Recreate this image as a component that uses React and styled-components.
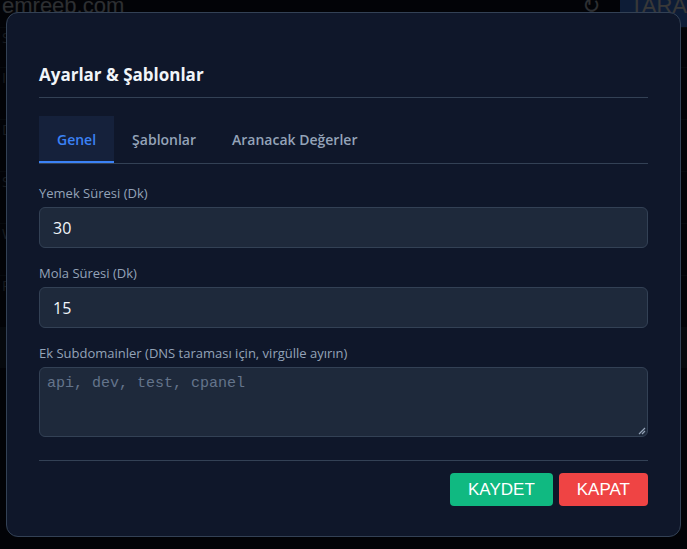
import React from "react";
import styled, { createGlobalStyle } from "styled-components";

const GlobalStyle = createGlobalStyle`
  html, body {
    margin: 0;
    padding: 0;
    height: 100%;
    background: #0b1120;
    font-family: "Open Sans", "Noto Sans", sans-serif;
    overflow: hidden;
  }
  * {
    box-sizing: border-box;
  }
`;

// page behind the modal
const Page = styled.div`
  margin-top: -16px;
  display: flex;
  flex-direction: column;
`;
const SearchBar = styled.div`
  display: flex;
  align-items: center;
  height: 44px;
  border-bottom: 1px solid #1e293b;
`;
const SearchInput = styled.div`
  flex: 1;
  display: flex;
  align-items: center;
  justify-content: space-between;
  height: 100%;
  padding: 0 20px 0 2px;
  color: #cbd5e1;
  font-family: "Liberation Sans", sans-serif;
  font-size: 22px;
`;
const ScanButton = styled.div`
  width: 77px;
  height: 100%;
  background: #3b82f6;
  color: #ffffff;
  font-family: "Liberation Sans", sans-serif;
  font-size: 22px;
  display: flex;
  align-items: center;
  justify-content: center;
  margin-right: -10px;
`;
const BgRow = styled.div`
  height: ${(p) => p.$h}px;
  border-bottom: 1px solid #1e293b;
  background: ${(p) => p.$bg || "transparent"};
  color: #64748b;
  font-size: 14px;
  padding-left: 2px;
`;

const Overlay = styled.div`
  position: fixed;
  inset: 0;
  background: rgba(0, 0, 0, 0.78);
  display: flex;
  align-items: flex-start;
  justify-content: center;
  padding-top: 12px;
`;

const Modal = styled.div`
  width: 675px;
  background: #0f172a;
  border: 1px solid #334155;
  border-radius: 12px;
  padding: 32px 32px 30px;
  display: flex;
  flex-direction: column;
`;
const Header = styled.div`
  padding: 18px 0 10px;
  border-bottom: 1px solid #334155;
`;
const Title = styled.h3`
  margin: 0;
  font-size: 17px;
  line-height: 24px;
  font-weight: 700;
  color: #f1f5f9;
`;

const TabList = styled.div`
  margin-top: 18px;
  display: flex;
  border-bottom: 1px solid #334155;
`;
const Tab = styled.div`
  height: 47px;
  padding: 2px 18px 0;
  display: flex;
  align-items: center;
  font-size: 14px;
  font-weight: 600;
  color: ${(p) => (p.$active ? "#3b82f6" : "#94a3b8")};
  background: ${(p) => (p.$active ? "#15213b" : "transparent")};
  border-bottom: 2px solid ${(p) => (p.$active ? "#3b82f6" : "transparent")};
`;

const Form = styled.div`
  margin-top: 20px;
  display: flex;
  flex-direction: column;
  gap: 16px;
`;
const Field = styled.div`
  display: flex;
  flex-direction: column;
  gap: 5px;
`;
const Label = styled.label`
  font-size: 13px;
  line-height: 18px;
  color: #94a3b8;
`;
const Input = styled.div`
  height: 41px;
  background: #1e293b;
  border: 1px solid #334155;
  border-radius: 6px;
  padding: 0 13px;
  display: flex;
  align-items: center;
  color: #f1f5f9;
  font-size: 16px;
`;
const TextArea = styled.div`
  position: relative;
  height: 70px;
  background: #1e293b;
  border: 1px solid #334155;
  border-radius: 6px;
  padding: 5px 7px;
  color: #64748b;
  font-family: "Liberation Mono", "DejaVu Sans Mono", monospace;
  font-size: 15px;
  line-height: 22px;
`;
const Grip = styled.svg`
  position: absolute;
  right: 1px;
  bottom: 1px;
`;

const Footer = styled.div`
  margin-top: 23px;
  padding-top: 12px;
  border-top: 1px solid #334155;
  display: flex;
  justify-content: flex-end;
  gap: 6px;
`;
const Button = styled.button`
  height: 33px;
  padding: 0 18px;
  border: none;
  border-radius: 4px;
  background: ${(p) => p.$bg};
  color: #ffffff;
  font-family: "Liberation Sans", Arial, sans-serif;
  font-size: 17px;
`;

export default function App() {
  return (
    <>
      <GlobalStyle />
      <Page>
        <SearchBar>
          <SearchInput>
            <span>emreeb.com</span>
            <span>↻</span>
          </SearchInput>
          <ScanButton>TARA</ScanButton>
        </SearchBar>
        <BgRow $h={40}>Site</BgRow>
        <BgRow $h={52}>IP</BgRow>
        <BgRow $h={52}>DNS</BgRow>
        <BgRow $h={52}>SSL</BgRow>
        <BgRow $h={52}>WHOIS</BgRow>
        <BgRow $h={52}>Port</BgRow>
        <BgRow $h={40} $bg="#1e293b" />
      </Page>
      <Overlay>
        <Modal>
          <Header>
            <Title>Ayarlar &amp; Şablonlar</Title>
          </Header>
          <TabList>
            <Tab $active>Genel</Tab>
            <Tab>Şablonlar</Tab>
            <Tab>Aranacak Değerler</Tab>
          </TabList>
          <Form>
            <Field>
              <Label>Yemek Süresi (Dk)</Label>
              <Input>30</Input>
            </Field>
            <Field>
              <Label>Mola Süresi (Dk)</Label>
              <Input>15</Input>
            </Field>
            <Field>
              <Label>Ek Subdomainler (DNS taraması için, virgülle ayırın)</Label>
              <TextArea>
                api, dev, test, cpanel
                <Grip width="9" height="9" viewBox="0 0 9 9">
                  <path d="M8 2 L2 8 M8 5 L5 8" stroke="#94a3b8" strokeWidth="1.2" />
                </Grip>
              </TextArea>
            </Field>
          </Form>
          <Footer>
            <Button $bg="#10b981">KAYDET</Button>
            <Button $bg="#ef4444">KAPAT</Button>
          </Footer>
        </Modal>
      </Overlay>
    </>
  );
}
